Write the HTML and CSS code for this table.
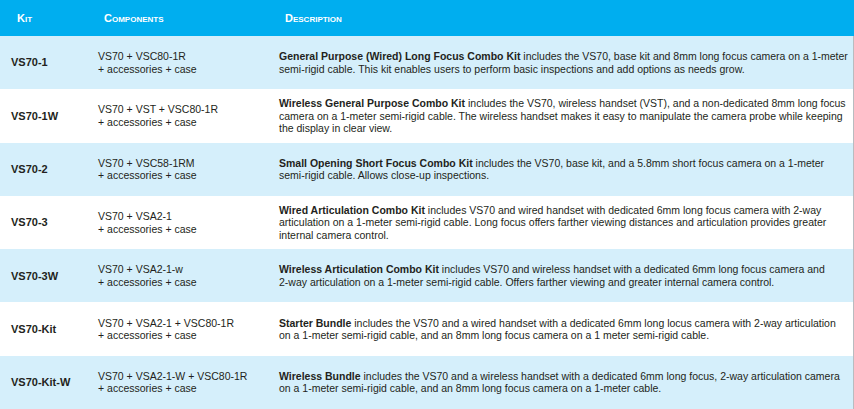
FILE: index.html
```html
<!DOCTYPE html>
<html>
<head>
<meta charset="utf-8">
<link rel="stylesheet" href="styles.css">
</head>
<body>
<table class="kits">
  <colgroup>
    <col class="w-kit">
    <col class="w-comp">
    <col class="w-desc">
  </colgroup>
  <thead>
    <tr class="head">
      <th>Kit</th>
      <th>Components</th>
      <th>Description</th>
    </tr>
  </thead>
  <tbody>
    <tr class="alt">
      <td class="c-kit">VS70-1</td>
      <td class="c-comp">VS70 + VSC80-1R<br>+ accessories + case</td>
      <td class="c-desc"><b>General Purpose (Wired) Long Focus Combo Kit</b> includes the VS70, base kit and 8mm long focus camera on a <span class="nw">1-meter</span> semi-rigid cable. This kit enables users to perform basic inspections and add options as needs grow.</td>
    </tr>
    <tr>
      <td class="c-kit">VS70-1W</td>
      <td class="c-comp">VS70 + VST + VSC80-1R<br>+ accessories + case</td>
      <td class="c-desc"><b>Wireless General Purpose Combo Kit</b> includes the VS70, wireless handset (VST), and a non-dedicated 8mm long focus camera on a 1-meter semi-rigid cable. The wireless handset makes it easy to manipulate the camera probe while keeping the display in clear view.</td>
    </tr>
    <tr class="alt">
      <td class="c-kit">VS70-2</td>
      <td class="c-comp">VS70 + VSC58-1RM<br>+ accessories + case</td>
      <td class="c-desc"><b>Small Opening Short Focus Combo Kit</b> includes the VS70, base kit, and a 5.8mm short focus camera on a <span class="nw">1-meter</span> semi-rigid cable. Allows close-up inspections.</td>
    </tr>
    <tr>
      <td class="c-kit">VS70-3</td>
      <td class="c-comp">VS70 + VSA2-1<br>+ accessories + case</td>
      <td class="c-desc"><b>Wired Articulation Combo Kit</b> includes VS70 and wired handset with dedicated 6mm long focus camera with <span class="nw">2-way</span> articulation on a 1-meter semi-rigid cable. Long focus offers farther viewing distances and articulation provides greater internal camera control.</td>
    </tr>
    <tr class="alt">
      <td class="c-kit">VS70-3W</td>
      <td class="c-comp">VS70 + VSA2-1-w<br>+ accessories + case</td>
      <td class="c-desc"><b>Wireless Articulation Combo Kit</b> includes VS70 and wireless handset with a dedicated 6mm long focus camera and <span class="nw">2-way</span> articulation on a 1-meter semi-rigid cable. Offers farther viewing and greater internal camera control.</td>
    </tr>
    <tr>
      <td class="c-kit">VS70-Kit</td>
      <td class="c-comp">VS70 + VSA2-1 + VSC80-1R<br>+ accessories + case</td>
      <td class="c-desc"><b>Starter Bundle</b> includes the VS70 and a wired handset with a dedicated 6mm long locus camera with <span class="nw">2-way</span> articulation on a 1-meter semi-rigid cable, and an 8mm long focus camera on a 1 meter semi-rigid cable.</td>
    </tr>
    <tr class="alt">
      <td class="c-kit">VS70-Kit-W</td>
      <td class="c-comp">VS70 + VSA2-1-W + VSC80-1R<br>+ accessories + case</td>
      <td class="c-desc"><b>Wireless Bundle</b> includes the VS70 and a wireless handset with a dedicated 6mm long focus, <span class="nw">2-way</span> articulation camera on a 1-meter semi-rigid cable, and an 8mm long focus camera on a 1-meter cable.</td>
    </tr>
  </tbody>
</table>
</body>
</html>
```

FILE: styles.css
```css
html, body {
  margin: 0;
  padding: 0;
  background: #ffffff;
}

.kits {
  width: 854px;
  border-collapse: collapse;
  table-layout: fixed;
  font-family: "Liberation Sans", Arial, sans-serif;
  color: #231f20;
}

.kits col.w-kit { width: 87px; }
.kits col.w-comp { width: 181px; }

.kits th {
  background: #00aeef;
  color: #ffffff;
  font-weight: bold;
  font-variant: small-caps;
  font-size: 11px;
  text-align: left;
  height: 36px;
  padding: 0 0 0 17px;
  vertical-align: middle;
}

.kits td {
  height: 53.3px;
  padding: 0 0 0 11px;
  vertical-align: middle;
  font-size: 10.5px;
  line-height: 12.5px;
}

.kits td.c-desc { padding-right: 3px; }

.kits td.c-kit {
  font-weight: bold;
  font-size: 11px;
}

.nw { white-space: nowrap; }

.kits tbody tr td:last-child {
  border-right: 1px solid #b8bcc0;
}

.kits tr.alt td {
  background: #d5effb;
}
```
